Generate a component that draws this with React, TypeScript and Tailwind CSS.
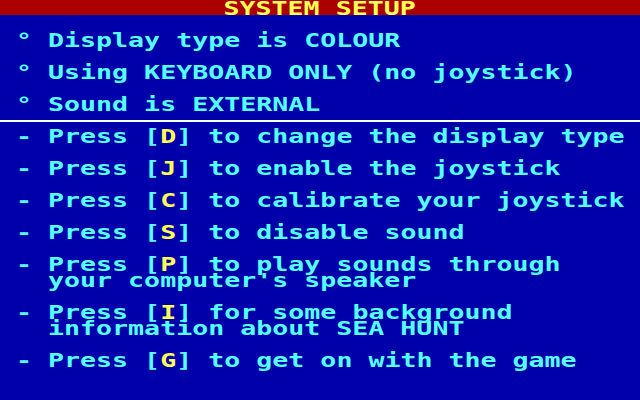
import React from 'react';

const font = "font-['DejaVu_Sans_Mono','Liberation_Mono',monospace] font-bold text-[19px] leading-4";

const Key = ({ k }: { k: string }) => (
  <>
    [<span className="text-[#FFFF55]">{k}</span>]
  </>
);

const App = () => {
  const status = [
    "° Display type is COLOUR",
    "° Using KEYBOARD ONLY (no joystick)",
    "° Sound is EXTERNAL",
  ];

  const options = [
    { key: "D", lines: ["to change the display type"] },
    { key: "J", lines: ["to enable the joystick"] },
    { key: "C", lines: ["to calibrate your joystick"] },
    { key: "S", lines: ["to disable sound"] },
    { key: "P", lines: ["to play sounds through", "your computer's speaker"] },
    { key: "I", lines: ["for some background", "information about SEA HUNT"] },
    { key: "G", lines: ["to get on with the game"] },
  ];

  return (
    <div className={`w-[640px] h-[400px] bg-[#0000AA] text-[#55FFFF] overflow-hidden ${font}`}>
      <div className="h-[15px] bg-[#AA0000] flex justify-center">
        <div className="origin-center scale-x-[1.4] text-[#FFFF55] whitespace-pre">SYSTEM SETUP</div>
      </div>

      <div className="pl-4 pt-[17px]">
        <div className="origin-left scale-x-[1.4] flex flex-col gap-4 whitespace-pre">
          {status.map((s, i) => (
            <div key={i}>{s}</div>
          ))}
        </div>
      </div>

      <div className="mt-2 h-[2px] bg-white" />

      <div className="pl-4 pt-[6px]">
        <div className="origin-left scale-x-[1.4] flex flex-col gap-4 whitespace-pre">
          {options.map((o, i) => (
            <div key={i}>
              <div>
                - Press <Key k={o.key} /> {o.lines[0]}
              </div>
              {o.lines[1] && <div>{"  " + o.lines[1]}</div>}
            </div>
          ))}
        </div>
      </div>
    </div>
  );
};

export default App;
